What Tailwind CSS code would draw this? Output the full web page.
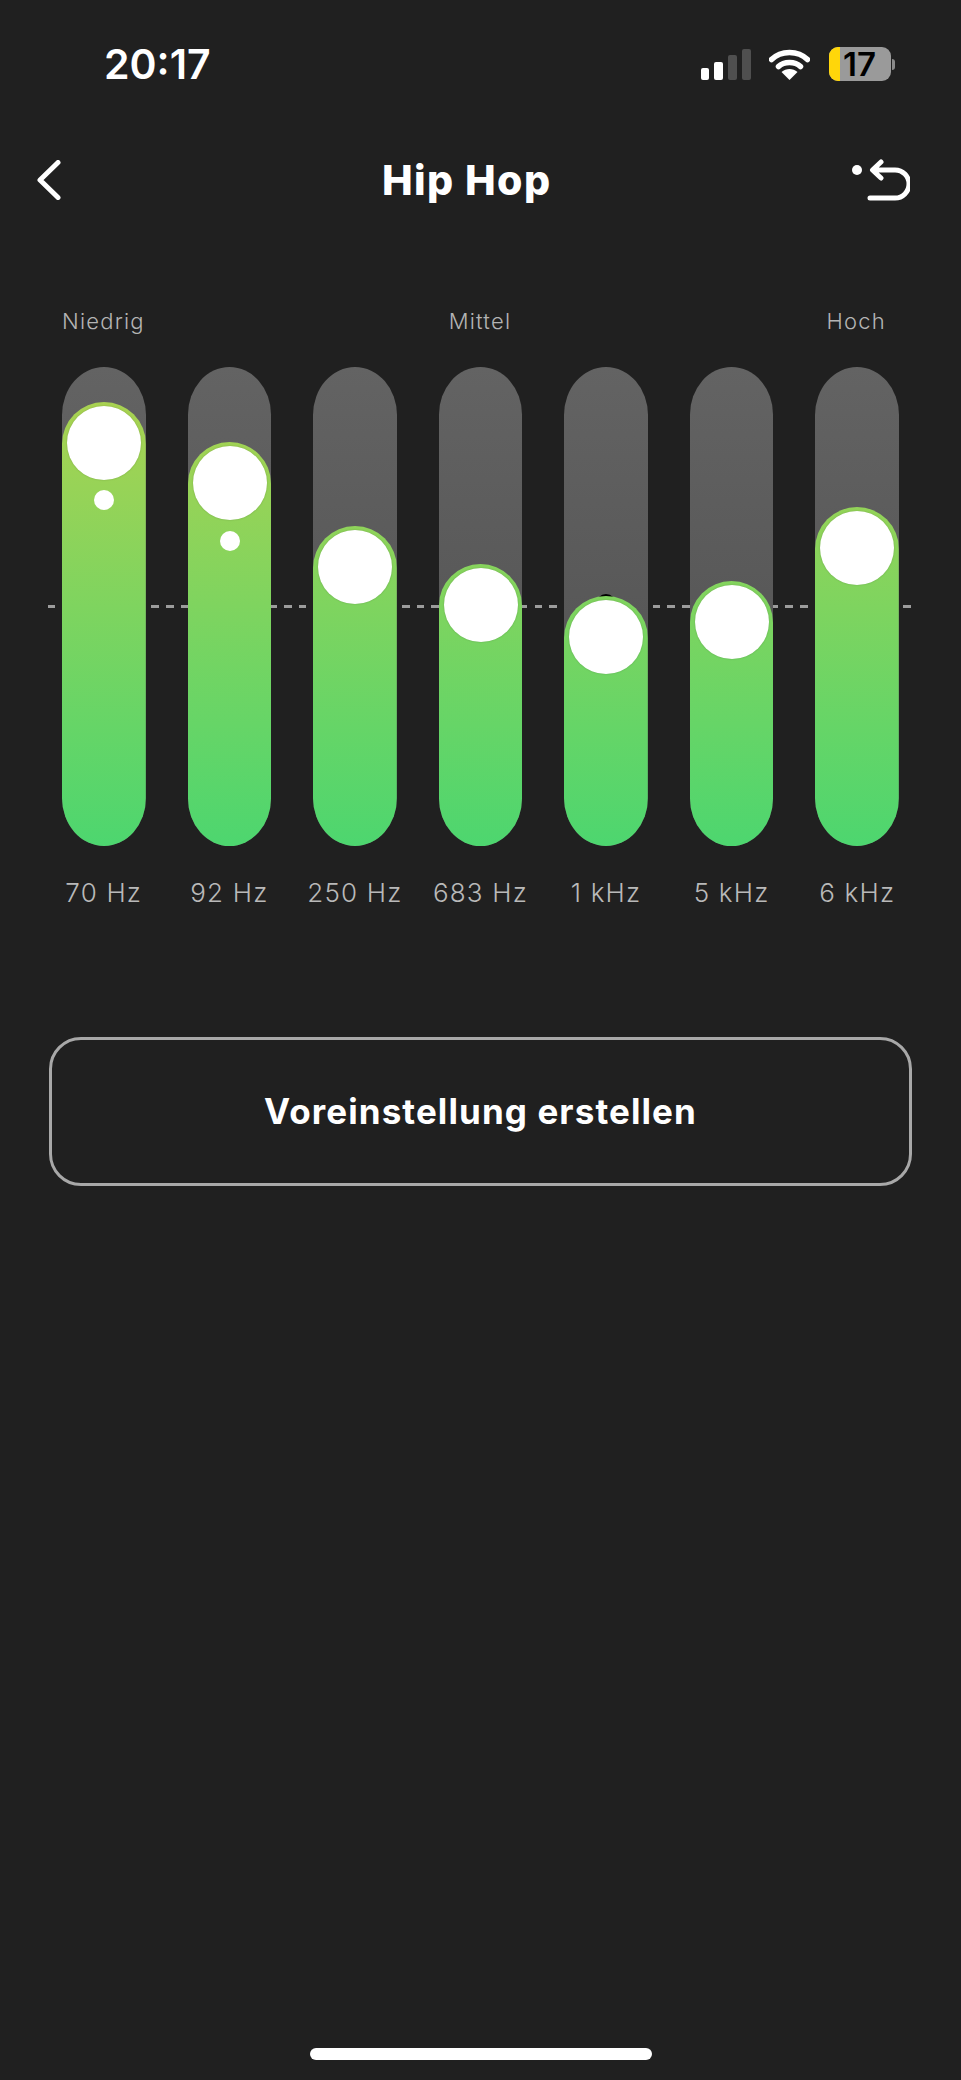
<!DOCTYPE html>
<html lang="de">
<head>
  <meta charset="UTF-8" />
  <meta name="viewport" content="width=device-width, initial-scale=1.0" />
  <title>Hip Hop Equalizer</title>
  <script src="https://cdn.jsdelivr.net/npm/@tailwindcss/browser@4"></script>
</head>
<body class="bg-[#202020] font-['Inter',sans-serif] text-white">
  <div class="relative flex h-[2080px] w-[961px] flex-col overflow-hidden bg-[#202020]">

    <!-- Status bar -->
    <div class="flex h-[36px] mt-[46px] items-center justify-between pl-[104px] pr-[66px]">
      <span class="text-[41px] font-semibold leading-none">20:17</span>
      <div class="flex items-center">
        <div class="flex items-end gap-[5px]">
          <div class="h-[12px] w-[8px] rounded-[2px] bg-white"></div>
          <div class="h-[18px] w-[9px] rounded-[2px] bg-white"></div>
          <div class="h-[25px] w-[9px] rounded-[2px] bg-[#4f4f4f]"></div>
          <div class="h-[31px] w-[9px] rounded-[2px] bg-[#4f4f4f]"></div>
        </div>
        <svg class="ml-[18px]" width="41" height="32" viewBox="0 0 41 32" fill="none">
          <path d="M2.5 11.5C12 2 29 2 38.5 11.5" stroke="white" stroke-width="5.5" stroke-linecap="round"/>
          <path d="M9.5 18.5C15 13 26 13 31.500 18.500" stroke="white" stroke-width="5.5" stroke-linecap="round"/>
          <path d="M20.500 32L12.500 24C17 20 24 20 28.500 24Z" fill="white"/>
        </svg>
        <div class="ml-[19px] flex items-center">
          <div class="flex h-[34px] w-[62px] items-center rounded-[9px] bg-[#9a9a9a]">
            <div class="h-full w-[11px] rounded-l-[9px] bg-[#ffd60a]"></div>
            <span class="ml-[3px] text-[33px] font-semibold leading-none text-black">17</span>
          </div>
          <div class="ml-[1px] h-[11px] w-[3px] rounded-r-full bg-[#8a8a8a]"></div>
        </div>
      </div>
    </div>

    <!-- Nav -->
    <div class="relative mt-[78px] flex h-[40px] items-center justify-between pl-[37px] pr-[51px]">
      <svg width="24" height="40" viewBox="0 0 24 40" fill="none">
        <path d="M21 2.500L3 20L21 37.500" stroke="white" stroke-width="5" stroke-linecap="round" stroke-linejoin="round"/>
      </svg>
      <h1 class="absolute left-[382px] w-[167px] whitespace-nowrap text-center text-[41px] font-extrabold leading-none tracking-[1.4px]">Hip Hop</h1>
      <svg width="60" height="46" viewBox="850 157 60 46" fill="none">
        <circle cx="857" cy="170" r="5" fill="white"/>
        <path d="M881 162L872.500 170L881 178M873 170H895A14 14 0 0 1 895 198H870" stroke="white" stroke-width="5" stroke-linecap="round" stroke-linejoin="round"/>
      </svg>
    </div>

    <!-- Range labels -->
    <div class="mt-[106px] grid h-[30px] grid-cols-[1fr_auto_1fr] items-center pl-[62px] pr-[75px] text-[22px] font-light leading-none tracking-[1.2px] text-[#b4b4b4]">
      <span>Niedrig</span>
      <span class="ml-[12px]">Mittel</span>
      <span class="text-right">Hoch</span>
    </div>

    <!-- Equalizer -->
    <div class="relative mt-[31px] flex h-[479px] justify-between px-[62px]">
      <div class="absolute left-[48px] top-[238px] h-[3px] w-[865px] bg-[repeating-linear-gradient(90deg,#9c9c9c_0_7.500px,transparent_7.500px_14.750px)]"></div>

      <div class="relative h-full w-[83.5px] overflow-hidden rounded-[42px/48px] bg-linear-to-b from-[#636363] to-[#4e4e4e]">
        <div class="absolute bottom-0 left-0 h-[444px] w-full rounded-t-[42px] bg-[linear-gradient(#b0d24f,#4dd66f)] bg-[length:100%_479px] bg-bottom">
          <div class="absolute left-[5px] top-[4px] h-[74px] w-[74px] rounded-full bg-white shadow-[0_0_2px_rgba(0,0,0,0.2)]"></div>
          <div class="absolute left-[32px] top-[88px] h-[20px] w-[20px] rounded-full bg-white"></div>
        </div>
      </div>

      <div class="relative h-full w-[83.5px] overflow-hidden rounded-[42px/48px] bg-linear-to-b from-[#636363] to-[#4e4e4e]">
        <div class="absolute bottom-0 left-0 h-[404px] w-full rounded-t-[42px] bg-[linear-gradient(#b0d24f,#4dd66f)] bg-[length:100%_479px] bg-bottom">
          <div class="absolute left-[5px] top-[4px] h-[74px] w-[74px] rounded-full bg-white shadow-[0_0_2px_rgba(0,0,0,0.2)]"></div>
          <div class="absolute left-[32px] top-[89px] h-[20px] w-[20px] rounded-full bg-white"></div>
        </div>
      </div>

      <div class="relative h-full w-[83.5px] overflow-hidden rounded-[42px/48px] bg-linear-to-b from-[#636363] to-[#4e4e4e]">
        <div class="absolute bottom-0 left-0 h-[320px] w-full rounded-t-[42px] bg-[linear-gradient(#b0d24f,#4dd66f)] bg-[length:100%_479px] bg-bottom">
          <div class="absolute left-[5px] top-[4px] h-[74px] w-[74px] rounded-full bg-white shadow-[0_0_2px_rgba(0,0,0,0.2)]"></div>
        </div>
      </div>

      <div class="relative h-full w-[83.5px] overflow-hidden rounded-[42px/48px] bg-linear-to-b from-[#636363] to-[#4e4e4e]">
        <div class="absolute bottom-0 left-0 h-[282px] w-full rounded-t-[42px] bg-[linear-gradient(#b0d24f,#4dd66f)] bg-[length:100%_479px] bg-bottom">
          <div class="absolute left-[5px] top-[4px] h-[74px] w-[74px] rounded-full bg-white shadow-[0_0_2px_rgba(0,0,0,0.2)]"></div>
        </div>
      </div>

      <div class="relative h-full w-[83.5px] overflow-hidden rounded-[42px/48px] bg-linear-to-b from-[#636363] to-[#4e4e4e]">
        <div class="absolute left-[32px] top-[227px] h-[20px] w-[20px] rounded-full bg-black"></div>
        <div class="absolute bottom-0 left-0 h-[250px] w-full rounded-t-[42px] bg-[linear-gradient(#b0d24f,#4dd66f)] bg-[length:100%_479px] bg-bottom">
          <div class="absolute left-[5px] top-[4px] h-[74px] w-[74px] rounded-full bg-white shadow-[0_0_2px_rgba(0,0,0,0.2)]"></div>
        </div>
      </div>

      <div class="relative h-full w-[83.5px] overflow-hidden rounded-[42px/48px] bg-linear-to-b from-[#636363] to-[#4e4e4e]">
        <div class="absolute bottom-0 left-0 h-[265px] w-full rounded-t-[42px] bg-[linear-gradient(#b0d24f,#4dd66f)] bg-[length:100%_479px] bg-bottom">
          <div class="absolute left-[5px] top-[4px] h-[74px] w-[74px] rounded-full bg-white shadow-[0_0_2px_rgba(0,0,0,0.2)]"></div>
        </div>
      </div>

      <div class="relative h-full w-[83.5px] overflow-hidden rounded-[42px/48px] bg-linear-to-b from-[#636363] to-[#4e4e4e]">
        <div class="absolute bottom-0 left-0 h-[339px] w-full rounded-t-[42px] bg-[linear-gradient(#b0d24f,#4dd66f)] bg-[length:100%_479px] bg-bottom">
          <div class="absolute left-[5px] top-[4px] h-[74px] w-[74px] rounded-full bg-white shadow-[0_0_2px_rgba(0,0,0,0.2)]"></div>
        </div>
      </div>
    </div>

    <!-- Frequencies -->
    <div class="mt-[30px] flex h-[34px] justify-between px-[62px] text-[26px] font-light leading-[34px] tracking-[1.2px] text-[#b9b9b9]">
      <span class="flex w-[83.5px] justify-center whitespace-nowrap">70 Hz</span>
      <span class="flex w-[83.5px] justify-center whitespace-nowrap">92 Hz</span>
      <span class="flex w-[83.5px] justify-center whitespace-nowrap">250 Hz</span>
      <span class="flex w-[83.5px] justify-center whitespace-nowrap">683 Hz</span>
      <span class="flex w-[83.5px] justify-center whitespace-nowrap">1 kHz</span>
      <span class="flex w-[83.5px] justify-center whitespace-nowrap">5 kHz</span>
      <span class="flex w-[83.5px] justify-center whitespace-nowrap">6 kHz</span>
    </div>

    <!-- Button -->
    <button class="mx-[49px] mt-[127px] flex h-[149px] w-[863px] items-center justify-center rounded-[32px] border-[3px] border-[#a8a8a8] text-[35px] font-bold tracking-[1.1px]">Voreinstellung erstellen</button>

    <!-- Home indicator -->
    <div class="mx-auto mt-auto mb-[20px] h-[12px] w-[342px] rounded-full bg-white"></div>
  </div>
</body>
</html>
